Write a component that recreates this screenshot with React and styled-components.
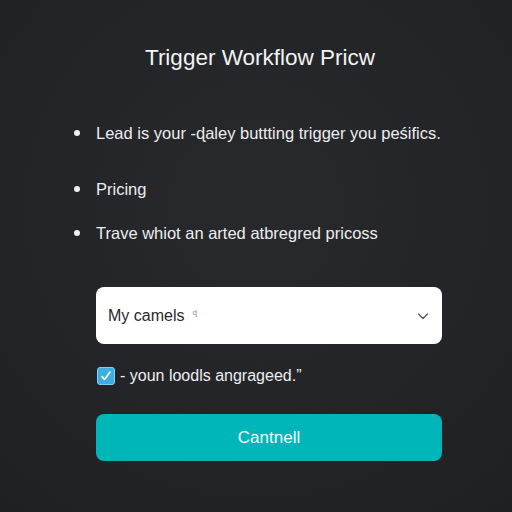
import React from "react";
import styled, { createGlobalStyle } from "styled-components";

const Global = createGlobalStyle`
  html, body { margin: 0; padding: 0; }
  body { background: #222428; font-family: "Liberation Sans", Arial, sans-serif; }
`;

const Page = styled.div`
  width: 512px;
  height: 512px;
  box-sizing: border-box;
  background: radial-gradient(circle at 50% 40%, #27292d 0%, #222428 60%, #1e2024 100%);
  padding: 45px 70px 0 74px;
  display: flex;
  flex-direction: column;
`;

const Title = styled.h1`
  margin: 0;
  text-align: center;
  font-weight: 400;
  font-size: 22.5px;
  color: #f2f2f2;
  line-height: 26px;
  padding-left: 4px;
`;

const List = styled.ul`
  list-style: none;
  margin: 52px 0 0 0;
  padding: 0;
  display: flex;
  flex-direction: column;
`;

const Item = styled.li`
  display: flex;
  align-items: center;
  gap: 16px;
  height: 20px;
  margin-bottom: ${(p) => p.$gap}px;
  font-size: 16.5px;
  color: #ededed;
  white-space: nowrap;
  &::before {
    content: "";
    width: 6px;
    height: 6px;
    border-radius: 50%;
    background: #f0f0f0;
    flex: none;
  }
`;

const Form = styled.div`
  margin-top: 44px;
  padding-left: 22px;
  width: 346px;
  display: flex;
  flex-direction: column;
`;

const Select = styled.div`
  height: 57px;
  background: #ffffff;
  border-radius: 8px;
  display: flex;
  align-items: center;
  justify-content: space-between;
  padding: 0 12px 0 12px;
  font-size: 16px;
  color: #2a2a2a;
`;

const Sup = styled.span`
  font-size: 8px;
  color: #888;
  vertical-align: 6px;
  margin-left: 8px;
`;

const CheckRow = styled.label`
  margin-top: 22px;
  display: flex;
  align-items: center;
  gap: 5px;
  font-size: 16px;
  color: #eeeeee;
  height: 19px;
`;

const Box = styled.span`
  width: 18px;
  height: 18px;
  border-radius: 3px;
  background: #3eaee0;
  border: 1px solid #7fd0f0;
  box-sizing: border-box;
  display: flex;
  align-items: center;
  justify-content: center;
  margin-left: 1px;
`;

const Button = styled.button`
  margin-top: 29px;
  height: 47px;
  border: none;
  border-radius: 8px;
  background: #00b6b9;
  color: #f4ffff;
  font-family: "Liberation Sans", Arial, sans-serif;
  font-size: 17px;
  cursor: pointer;
`;

export default function App() {
  return (
    <>
      <Global />
      <Page>
        <Title>Trigger Workflow Pricw</Title>
        <List>
          <Item $gap={36}>Lead is your ‑ɖaley buttting trigger you peśifics.</Item>
          <Item $gap={24}>Pricing</Item>
          <Item $gap={0}>Trave whiot an arted atbregred pricoss</Item>
        </List>
        <Form>
          <Select>
            <span>
              My camels<Sup>ɖ</Sup>
            </span>
            <svg width="14" height="14" viewBox="0 0 14 14" fill="none">
              <path d="M2.5 5l4.5 4.5L11.5 5" stroke="#555" strokeWidth="1.3" strokeLinecap="round" strokeLinejoin="round" />
            </svg>
          </Select>
          <CheckRow>
            <Box>
              <svg width="12" height="12" viewBox="0 0 12 12" fill="none">
                <path d="M2 6.5l2.5 3L10 2" stroke="#fff" strokeWidth="1.6" strokeLinecap="round" strokeLinejoin="round" />
              </svg>
            </Box>
            <span>- youn loodls angrageed.”</span>
          </CheckRow>
          <Button>Cantnell</Button>
        </Form>
      </Page>
    </>
  );
}
